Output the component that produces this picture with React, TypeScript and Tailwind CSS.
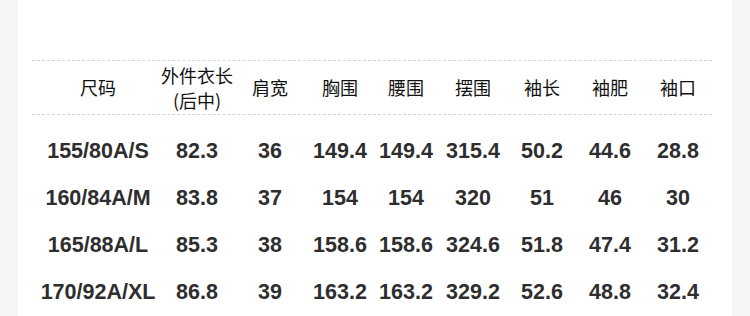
const HEAD: string[][] = [
  ["尺码"],
  ["外件衣长", "(后中)"],
  ["肩宽"],
  ["胸围"],
  ["腰围"],
  ["摆围"],
  ["袖长"],
  ["袖肥"],
  ["袖口"],
];

const ROWS: string[][] = [
  ["155/80A/S", "82.3", "36", "149.4", "149.4", "315.4", "50.2", "44.6", "28.8"],
  ["160/84A/M", "83.8", "37", "154", "154", "320", "51", "46", "30"],
  ["165/88A/L", "85.3", "38", "158.6", "158.6", "324.6", "51.8", "47.4", "31.2"],
  ["170/92A/XL", "86.8", "39", "163.2", "163.2", "329.2", "52.6", "48.8", "32.4"],
];

// fixed column widths so each label sits on the same centre as the original chart
const COLS = "grid-cols-[100px_98px_48px_92px_40px_94px_44px_92px_44px]";

export default function App() {
  return (
    <div className="flex h-[316px] w-[750px] overflow-hidden bg-[#f6f6f6]">
      <div className="ml-[18px] w-[714px] bg-white pl-[14px] pt-[60px]">
        <div className="w-[680px] border-t border-dashed border-[#d4d4d4]">
          <div
            className={`grid ${COLS} h-[53px] items-center pl-[16px] text-[18px] leading-[25px] text-[#111]`}
            style={{ fontFamily: '"Noto Sans CJK SC", "Noto Sans", sans-serif' }}
          >
            {HEAD.map((lines, i) => (
              <div key={i} className="flex flex-col items-center whitespace-nowrap">
                {lines.map((l) => (
                  <span key={l}>{l}</span>
                ))}
              </div>
            ))}
          </div>
        </div>
        <div className="w-[680px] border-t border-dashed border-[#d4d4d4] pt-[13px]">
          {ROWS.map((row) => (
            <div
              key={row[0]}
              className={`grid ${COLS} h-[47px] items-center pl-[16px] font-bold text-[21.5px] text-[#2e2e2e]`}
              style={{ fontFamily: '"Liberation Sans", Arial, sans-serif' }}
            >
              {row.map((v, i) => (
                <div key={i} className="flex justify-center whitespace-nowrap">
                  {v}
                </div>
              ))}
            </div>
          ))}
        </div>
      </div>
    </div>
  );
}
